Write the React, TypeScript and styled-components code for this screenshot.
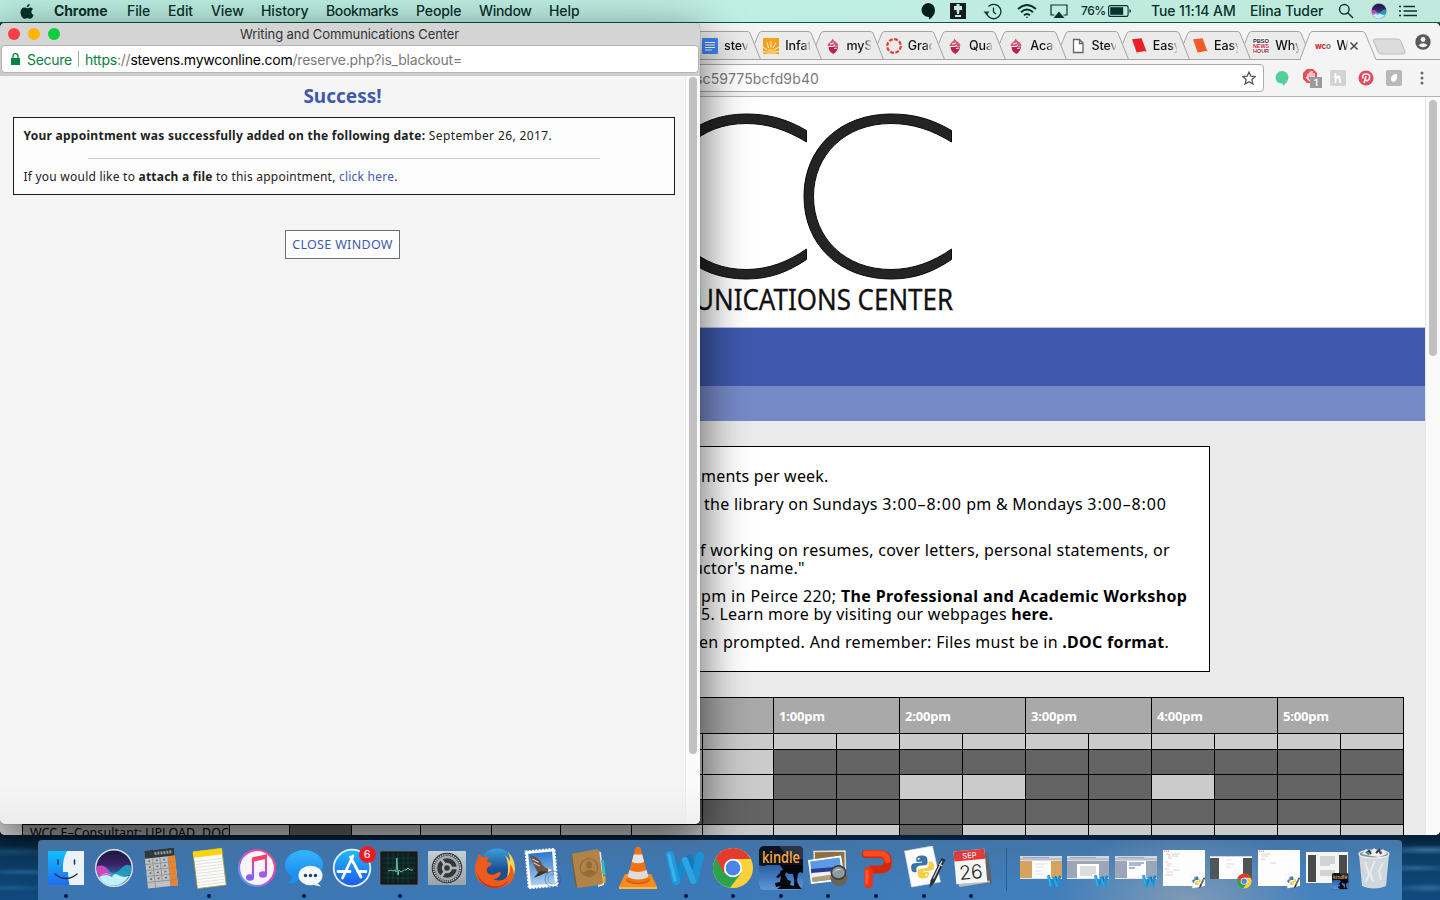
import React from "react";
import styled, { createGlobalStyle } from "styled-components";

const ui = `Inter, "Liberation Sans", sans-serif`;
const humanist = `"Noto Sans", "Open Sans", sans-serif`;

const GlobalStyle = createGlobalStyle`
  * { box-sizing: border-box; }
  html, body { margin: 0; padding: 0; overflow: hidden; }
  svg { display: block; }
`;

const Desktop = styled.div`
  position: relative;
  width: 1440px;
  height: 900px;
  overflow: hidden;
  font-family: ${ui};
  background:
    radial-gradient(ellipse 60px 5px at 14px 852px, #1d5580, transparent),
    radial-gradient(ellipse 50px 4px at 24px 872px, #1f6296, transparent),
    radial-gradient(ellipse 40px 4px at 10px 888px, #1b5c91, transparent),
    radial-gradient(ellipse 50px 5px at 1428px 850px, #3a6f97, transparent),
    radial-gradient(ellipse 40px 4px at 1415px 868px, #2c6692, transparent),
    radial-gradient(ellipse 40px 5px at 1430px 888px, #2a6a9a, transparent),
    linear-gradient(#0b5745 0 24px, #06213b 24px 838px, #0b3d68 856px, #104a7c 900px);
`;

/* ---------- menu bar ---------- */
const MenuBar = styled.header`
  display: flex;
  align-items: center;
  height: 22px;
  background: linear-gradient(90deg, #b9ecdf, #bfeee3 50%, #bfe9dc);
  color: #08322b;
`;
const AppleSlot = styled.div`
  width: 54px;
  padding-left: 20px;
`;
const MenuItem = styled.span<{ $w: number; $bold?: boolean; $ls?: number }>`
  width: ${(p) => p.$w}px;
  font-size: 14px;
  line-height: 22px;
  font-weight: ${(p) => (p.$bold ? 700 : 500)};
  letter-spacing: ${(p) => p.$ls ?? -0.1}px;
  white-space: nowrap;
`;
const StatusGroup = styled.div`
  display: flex;
  align-items: center;
  margin-left: auto;
  width: 527px;
`;
const StatusSlot = styled.div<{ $w: number }>`
  width: ${(p) => p.$w}px;
  display: flex;
  justify-content: center;
  flex: none;
`;
const StatusText = styled(MenuItem)<{ $size?: number }>`
  font-size: ${(p) => p.$size ?? 14}px;
  flex: none;
`;

/* ---------- browser window ---------- */
const BrowserWindow = styled.section`
  position: absolute;
  isolation: isolate;
  left: 0;
  top: 23px;
  width: 1440px;
  height: 812px;
  display: flex;
  flex-direction: column;
  background: #f3f3f3;
  border-radius: 5px;
  overflow: hidden;
`;
const TabStrip = styled.div`
  display: flex;
  height: 37px;
  padding: 8px 0 0 687px;
  background: #f4f4f4;
  box-shadow: inset 0 -1px #a6a6a6;
  flex: none;
`;
const TabBox = styled.div<{ $z: number; $w: number }>`
  position: relative;
  z-index: ${(p) => p.$z};
  width: ${(p) => p.$w}px;
  height: 29px;
  margin-right: -12.75px;
  padding-left: 15px;
  display: flex;
  align-items: center;
  flex: none;
  color: #111;
`;
const TabShape = styled.svg`
  position: absolute;
  left: 0;
  top: 0;
  z-index: -1;
`;
const TabTitle = styled.span<{ $w: number }>`
  width: ${(p) => p.$w}px;
  margin-left: 6px;
  font-size: 12.5px;
  font-weight: 450;
  letter-spacing: -0.1px;
  overflow: hidden;
  white-space: nowrap;
  mask-image: linear-gradient(90deg, #000 68%, rgba(0, 0, 0, 0.15));
`;
const NewTab = styled.svg`
  margin: 7px 0 0 8px;
  flex: none;
`;
const Profile = styled.svg`
  margin: 3px 0 0 7px;
  flex: none;
`;
const Toolbar = styled.div`
  display: flex;
  align-items: center;
  height: 37px;
  flex: none;
  background: #f4f4f4;
  border-bottom: 1px solid #b3b3b3;
`;
const AddressBar = styled.div`
  width: 1264px;
  height: 28px;
  display: flex;
  align-items: center;
  justify-content: space-between;
  padding: 0 7px 0 694px;
  background: #fff;
  border: 1px solid #ababab;
  border-radius: 4px;
  color: #7a7a7a;
  font-size: 14px;
  letter-spacing: 0.15px;
`;
const Extensions = styled.div`
  display: flex;
  align-items: center;
  gap: 12px;
  padding-left: 10px;
`;
const HoneyIcon = styled.svg`
  margin-left: -4px;
`;
const Page = styled.main`
  display: flex;
  flex: 1;
  min-height: 0;
  background: #ebebeb;
`;
const PageBody = styled.div`
  width: 1425px;
  overflow: hidden;
  flex: none;
`;
const PageScroll = styled.div`
  width: 15px;
  background: #fafafa;
  border-left: 1px solid #e8e8e8;
  padding: 3px 0 0 3px;
`;
const Thumb = styled.div<{ $h: number; $w: number }>`
  width: ${(p) => p.$w}px;
  height: ${(p) => p.$h}px;
  border-radius: 4px;
  background: #c1c1c1;
`;
const Banner = styled.div`
  height: 230px;
  background: #fff;
  padding-left: 640px;
`;
const NavBand = styled.div`
  height: 59px;
  background: #3e59ad;
  border-top: 1px solid #b9bfd4;
`;
const SubBand = styled.div`
  height: 35px;
  background: #768ac8;
`;
const Notice = styled.div`
  width: 995px;
  height: 226px;
  margin: 25px 0 25px 215px;
  padding: 20px 0 0 485px;
  background: #fff;
  border: 1px solid #000;
  display: flex;
  flex-direction: column;
  gap: 10px;
`;
const Paragraph = styled.div`
  font-family: ${humanist};
  font-size: 16px;
  line-height: 18px;
  color: #000;
`;
const Line = styled.div<{ $x?: number; $ls?: number }>`
  height: 18px;
  margin-left: ${(p) => p.$x ?? 0}px;
  letter-spacing: ${(p) => p.$ls ?? 0.2}px;
  white-space: nowrap;
`;
const Time = styled.span`
  letter-spacing: 0.9px;
`;
const Strong = styled.b<{ $ls?: number }>`
  font-weight: 700;
  letter-spacing: ${(p) => (p.$ls === undefined ? "inherit" : p.$ls + "px")};
`;

const Schedule = styled.div`
  width: 1382px;
  margin-left: 22px;
  display: grid;
  grid-template-columns: 207px 60px 62px 69px 71px 69px 71px 71px 71px repeat(10, 63px) 1px;
  grid-template-rows: 36px 16px 25px 25px 25px 25px;
`;
type Tone = "head" | "open" | "busy" | "name";
const tones: Record<Tone, string> = { head: "#a9a9a9", open: "#cbcbcb", busy: "#636363", name: "#a9a9a9" };
const Slot = styled.div<{ $tone: Tone; $span?: number }>`
  grid-column: span ${(p) => p.$span ?? 1};
  background: ${(p) => tones[p.$tone]};
  border: solid #000;
  border-width: 1px 0 0 1px;
  overflow: hidden;
`;
const HourCell = styled(Slot)`
  padding-left: 5px;
  font: 700 13px/36px "Open Sans", ${humanist};
  letter-spacing: -0.2px;
  color: #fff;
`;
const NameCell = styled(Slot)`
  padding-left: 7px;
  font: 12.5px/16px ${humanist};
  letter-spacing: 0.07px;
  white-space: nowrap;
  color: #000;
`;
const RightRule = styled.div`
  background: #000;
`;

/* ---------- confirmation popup ---------- */
const Popup = styled.section`
  position: absolute;
  left: 0;
  top: 23px;
  width: 700px;
  height: 801px;
  display: flex;
  flex-direction: column;
  border-radius: 5px;
  overflow: hidden;
  background: #ccc;
  box-shadow: 0 0 1px rgba(0, 0, 0, 0.5), 0 16px 46px 4px rgba(0, 0, 0, 0.58);
`;
const TitleBar = styled.div`
  height: 22px;
  display: flex;
  align-items: center;
  gap: 8px;
  padding-left: 8px;
  background: #d4d4d4;
  flex: none;
`;
const Light = styled.i<{ $c: string }>`
  width: 12px;
  height: 12px;
  border-radius: 50%;
  background: ${(p) => p.$c};
`;
const WindowTitle = styled.span`
  margin-left: 172px;
  font-size: 13px;
  letter-spacing: -0.09px;
  color: #333;
`;
const PopupAddress = styled.div`
  display: flex;
  align-items: center;
  height: 28px;
  margin: 0 1px 3px;
  padding-left: 9px;
  background: #fff;
  border: 1px solid #b4b4b4;
  border-radius: 4px;
  font-size: 14px;
  color: #7a7a7a;
  white-space: nowrap;
  flex: none;
`;
const SecureLabel = styled.span`
  width: 51px;
  margin-left: 7px;
  letter-spacing: -0.3px;
  color: #0b8043;
`;
const Divider = styled.i`
  width: 1px;
  height: 16px;
  margin-right: 6px;
  background: #a5a5a5;
`;
const Url = styled.span`
  letter-spacing: -0.22px;
  em { font-style: normal; color: #0b8043; }
  strong { font-weight: 400; color: #000; }
`;
const PopupContent = styled.div`
  display: flex;
  flex: 1;
`;
const PopupBody = styled.div`
  width: 685px;
  display: flex;
  flex-direction: column;
  align-items: center;
  background: linear-gradient(#f5f5f5 710px, #ececec);
  font-family: ${humanist};
`;
const PopupScroll = styled.div`
  width: 15px;
  padding: 1px 0 0 3px;
  background: linear-gradient(#fafafa 710px, #f0f0f0);
  border-left: 1px solid #e9e9e9;
`;
const Heading = styled.h1`
  margin: 7px 0 8px;
  font-size: 19px;
  line-height: 26px;
  font-weight: 700;
  color: #3e59ad;
`;
const Message = styled.div`
  width: 662px;
  height: 78px;
  margin-left: 2px;
  padding: 9px 10px;
  border: 1px solid #1c1c1c;
  background: #fdfdfd;
  font-size: 12px;
  line-height: 18px;
  color: #222;
  white-space: nowrap;
`;
const Rule = styled.div`
  height: 1px;
  width: 512px;
  margin: 13px 0 9px 64px;
  background: #ccc;
`;
const MsgLine = styled.div<{ $ls: number }>`
  letter-spacing: ${(p) => p.$ls}px;
`;
const LinkText = styled.a`
  color: #3e59ad;
`;
const CloseButton = styled.button`
  width: 115px;
  height: 29px;
  margin-top: 35px;
  padding: 0;
  border: 1px solid #707070;
  background: #fdfdfd;
  color: #3e59ad;
  font: 12.5px/27px ${humanist};
  letter-spacing: 0.32px;
  white-space: nowrap;
`;

/* ---------- dock ---------- */
const Dock = styled.nav`
  position: absolute;
  left: 38px;
  top: 840px;
  width: 1364px;
  height: 60px;
  padding-left: 4.2px;
  display: flex;
  border-radius: 4px 4px 0 0;
  background:
    radial-gradient(ellipse 130px 70px at 1148px 60px, #7f9ab6, transparent),
    linear-gradient(180deg, rgba(70, 110, 150, 0.55), transparent 70%),
    linear-gradient(90deg, #3b76b2, #3d79b7 50%, #4583be);
`;
const DockSlot = styled.div<{ $running?: boolean }>`
  position: relative;
  width: 47.65px;
  height: 60px;
  display: flex;
  justify-content: center;
  padding-top: 6px;
  flex: none;
  &::after {
    content: "";
    display: ${(p) => (p.$running ? "block" : "none")};
    position: absolute;
    left: 22px;
    bottom: 2px;
    width: 4px;
    height: 4px;
    border-radius: 50%;
    background: #06133a;
  }
`;
const DockDivider = styled.div`
  width: 1px;
  height: 43px;
  margin: 8px 10.5px 0;
  background: #235c92;
  flex: none;
`;
const Badge = styled.span`
  position: absolute;
  right: 0px;
  top: 6px;
  width: 17px;
  height: 17px;
  border-radius: 50%;
  background: #ef1b24;
  color: #fff;
  font-size: 11px;
  line-height: 17px;
  text-align: center;
`;
const Gradients = styled.svg`
  position: absolute;
`;

/* ---------- small drawings ---------- */
const tabIcons: Record<string, React.ReactNode> = {
  doc: <><rect width="16" height="16" rx="1" fill="#4285f4" /><path d="M3 4.500h10M3 7h10M3 9.500h10M3 12h7" stroke="#fff" strokeWidth="1.200" /></>,
  sun: <><rect width="16" height="16" fill="#f9a01b" /><path d="M5.500 10L4 4.500M8 9.500V3M10 10l3-5.500M11 12l5-3M4 12L0 9M11.500 14l4.500-.5M3.500 14L0 14" stroke="#fff" strokeWidth=".9" fill="none" /><path d="M4 16q-1-5 4-5 4 0 5 5z" fill="#fcc369" /></>,
  acorn: <><path d="M3.500 8.500c0 4 2 6 5 7.500 2.500-2 4.500-4 4.500-7.500z" fill="#b8234b" /><path d="M2.500 8C3 4 6.500 4.500 7.500.5 9 3.500 13 4 13.500 8z" fill="#cf5b7b" /><path d="M3.500 8.500h4.500l2-1.500M5 6l4-1M9 10.500l3-.5" stroke="#fff" strokeWidth=".9" fill="none" /></>,
  ring: <circle cx="8" cy="8" r="6.800" fill="none" stroke="#e23b30" strokeWidth="2.200" strokeDasharray="3.800 1.540" />,
  file: <path d="M3.500 1.500h6l3.500 3.500v9.500h-9.500zM9.500 1.500v4h3.500" fill="#fff" stroke="#666" strokeWidth="1.300" />,
  redbook: <><path d="M1 1.200L10.500.3 15.500 13.500 6 15.500z" fill="#e8202a" /><path d="M6 15L14.500 13.500" stroke="#fff" strokeWidth="1" /></>,
  orangebook: <><path d="M1 1.200L10.500.3 15.500 13.500 6 15.500z" fill="#f15a29" /><path d="M6 15L14.500 13.500" stroke="#fff" strokeWidth="1" /></>,
  pbs: (
    <g fontFamily="Liberation Sans, sans-serif" fontWeight="700" fontSize="5.800">
      <rect width="16" height="16" fill="#fff" />
      <text x="0" y="5" textLength="16" lengthAdjust="spacingAndGlyphs" fill="#222">PBSO</text>
      <text x="0" y="10" textLength="16" lengthAdjust="spacingAndGlyphs" fill="#c62a35">NEWS</text>
      <text x="0" y="15" textLength="16" lengthAdjust="spacingAndGlyphs" fill="#9d1d2b">HOUR</text>
    </g>
  ),
  wco: (
    <text x="0" y="11" textLength="16" fontFamily="Inter, sans-serif" fontWeight="700" fontSize="8" fill="#d3202a">
      wc<tspan fill="#777">o</tspan>
    </text>
  ),
};
const tabs = [
  { icon: "doc", title: "stev", w: 24 },
  { icon: "sun", title: "Infati", w: 25 },
  { icon: "acorn", title: "mySt", w: 24 },
  { icon: "ring", title: "Grad", w: 24 },
  { icon: "acorn", title: "Qual", w: 23 },
  { icon: "acorn", title: "Acad", w: 24 },
  { icon: "file", title: "Steve", w: 24 },
  { icon: "redbook", title: "Easy", w: 24 },
  { icon: "orangebook", title: "Easy", w: 24 },
  { icon: "pbs", title: "Why", w: 24 },
];

function Tab({ icon, title, w, z, active }: { icon: string; title: string; w: number; z: number; active?: boolean }) {
  return (
    <TabBox $z={z} $w={active ? 77 : 74}>
      <TabShape width={active ? 77 : 74} height="29" viewBox={`0 0 ${active ? 77 : 74} 29`}>
        <path
          d={active ? "M0 28.500L10 2Q11 .5 13 .5H62Q64 .5 65 2L76 28.500" : "M0 28.500L11 2Q12 .5 14 .5H60Q62 .5 63 2L73.500 28.500Z"}
          fill={active ? "#f4f4f4" : "#ebebeb"}
          stroke="#a4a4a4"
        />
        {active && <path d="M1 28.500H75.500" stroke="#f4f4f4" strokeWidth="1.400" />}
      </TabShape>
      <svg width="16" height="16" viewBox="0 0 16 16">{tabIcons[icon]}</svg>
      <TabTitle $w={w}>{title}</TabTitle>
      {active && (
        <svg width="12" height="12" viewBox="0 0 12 12">
          <path d="M2.500 2.500l7 7M9.500 2.500l-7 7" stroke="#4c4c4c" strokeWidth="1.600" />
        </svg>
      )}
    </TabBox>
  );
}

const letterC =
  "M311.500 33.500C290 21 272 17 251 17C200 17 164 51 164 99.500C164 148 200 182 251 182C275 182 293 175 311.500 162.500V152C293 165 273 172.500 251 172.500C205 172.500 173.500 141 173.500 99.500C173.500 58 205 26.500 251 26.500C273 26.500 292 33 311.500 45Z";

function Logo() {
  return (
    <svg width="330" height="230" viewBox="0 0 330 230">
      <g fill="#242424" stroke="#0c0c0c" strokeWidth="1">
        <path d={letterC} />
        <path d={letterC} transform="translate(-145 0)" />
      </g>
      <text x="55" y="213" textLength="258" lengthAdjust="spacingAndGlyphs" fontFamily="Noto Sans, sans-serif" fontSize="28.500" fill="#111" stroke="#111" strokeWidth=".3">
        UNICATIONS CENTER
      </text>
    </svg>
  );
}

const wordMark = (
  <g fill="none" strokeLinecap="round" strokeLinejoin="round" strokeWidth="8">
    <path d="M26 13L31 34" stroke="#1379bd" />
    <path d="M14 34L22 15" stroke="#108bd0" />
    <path d="M31 34L37 10" stroke="#1a93d6" />
    <path d="M7 9L13 35" stroke="#1e9bdc" />
    <path d="M22 14L30 35" stroke="#2aa5e3" strokeWidth="6" />
    <path d="M6 9l6 25" stroke="#3db2ec" strokeWidth="3" />
  </g>
);
const chromeMark = (
  <g>
    <circle cx="22" cy="22" r="20" fill="#fcd13a" />
    <path d="M4.700 12a20 20 0 0014.300 29.800L30.500 26.500 13.500 27z" fill="#2ba24c" />
    <path d="M22 2a20 20 0 0117.600 11H22L13 27 4.700 12A20 20 0 0122 2z" fill="#e33b2e" />
    <circle cx="22" cy="22" r="9.200" fill="#fff" />
    <circle cx="22" cy="22" r="7.400" fill="#4a86e8" />
  </g>
);
const pythonMark = (
  <g>
    <path d="M2.500 5l28-5 8 36-29 5z" fill="#fdfdfd" stroke="#d7d7d7" strokeWidth=".6" />
    <g transform="rotate(-6 20 20)">
      <path d="M20 9.500c-4 0-5 1.600-5 3.500v2.500h5.500v1H12.500c-2.500 0-3.500 2-3.500 4.500s1 4.500 3 4.500h2v-2.500c0-2 1.500-3.500 3.500-3.500H23c2 0 3-1.500 3-3V13c0-2-2-3.500-6-3.500z" fill="#3b74a8" />
      <path d="M21 32.500c4 0 5-1.600 5-3.500v-2.500h-5.500v-1h8c2.500 0 3.500-2 3.500-4.500s-1-4.500-3-4.500h-2V19c0 2-1.500 3.500-3.500 3.500H18c-2 0-3 1.500-3 3V29c0 2 2 3.500 6 3.500z" fill="#f7cf42" />
      <circle cx="17.500" cy="12.500" r="1" fill="#fff" />
      <circle cx="23.500" cy="29.500" r="1" fill="#fff" />
    </g>
    <path d="M39.500 12l4 1.500-11 23-5 5.500 1-7.500z" fill="#2c3136" />
    <path d="M40 15l-8.500 17.500M37 18l3.500 2" stroke="#cfd3d6" strokeWidth="1.200" />
  </g>
);
const kindleMark = (
  <g>
    <rect width="44" height="44" rx="5" fill="#0b1220" />
    <path d="M20 0h19q5 0 5 5v8q-14 2-24-13z" fill="#2b3444" />
    <path d="M0 19h44v20q0 5-5 5H5q-5 0-5-5z" fill="url(#kindleSky)" />
    <path d="M21 19h23v8l-3-1-2 2-1 6q1 6 5 9H18l4-3-5 1-1-4 5-1 1-6-3 2-2-1 4-4q0-3 3-3t3 3l-1 2 3 5 3 1-1 4 4 1q1-6-1-12l-4 0-5-3z" fill="#04070d" />
    <path d="M0 19q4 2 8 0z" fill="#0b1220" />
    <text x="3" y="16.500" textLength="38" lengthAdjust="spacingAndGlyphs" fontFamily="Open Sans, sans-serif" fontSize="16.500" fontWeight="600" fill="#fba93c">kindle</text>
  </g>
);

const icons: Record<string, React.ReactNode> = {
  finder: <><rect x="4" y="5" width="36" height="34" rx="1" fill="url(#finderBlue)" /><path d="M23 5h17v34H25.500q-1.500-6-1.500-13h-5Q18 14 23 5z" fill="#eaf1f8" /><path d="M14 14v4M30.500 14v4M11 28q11 9 22 0" fill="none" stroke="#14304f" strokeWidth="1.500" strokeLinecap="round" /></>,
  siri: <><circle cx="22" cy="22" r="18.300" fill="url(#siriBg)" stroke="#dfe3ea" strokeWidth="1.400" /><path d="M4.500 21q7-4 13 4 5 5 12-3 6-6 10-1 0 5-2 8-14 3-31 0-2-4-2-8z" fill="#1fa7c4" opacity=".85" /><path d="M4.500 21q6-4 11 3l4 5q-8 3-13 1-2-4-2-9z" fill="#e83ac0" opacity=".85" /><path d="M7 31q7-4 13 0 2-5 6-2 5 3 11 1-5 9-15 9.500T7 31z" fill="#bdf1fb" /><path d="M6 30q8-5 16 0t16 0q-8 4-16 0T6 30z" fill="#fff" /></>,
  calc: <g transform="rotate(-6 22 22)"><rect x="7" y="3" width="30" height="38" fill="#bfc1c2" /><path d="M7 3h30v8H7z" fill="#2c3a3e" /><path d="M30 11h7v30h-7z" fill="#f5811f" /><path d="M7 17h30M7 23h30M7 29h30M7 35h30M14.500 11v30M22 11v24M30 11v30" stroke="#8b8f91" strokeWidth=".8" /><path d="M17 7h18" stroke="#8d9a9c" strokeWidth="3" strokeDasharray="2 1" /><path d="M10 14h2M17.500 14h2M25 14h2M10 20h2M17.500 20h2M25 20h2M10 26h2M17.500 26h2M25 26h2M10 32h2M17.500 32h2M25 32h2" stroke="#66696b" strokeWidth="1.500" /></g>,
  notes: <g transform="rotate(-7 22 22)"><rect x="8" y="4" width="29" height="37" fill="#fcfcfa" stroke="#b59b3b" strokeWidth=".8" /><path d="M8 4h29v6H8z" fill="#fbd50c" /><path d="M9 14h27M9 17h27M9 20h27M9 23h27M9 26h27M9 29h27M9 32h27M9 35h27M9 38h27" stroke="#dcdcdc" strokeWidth=".8" /></g>,
  music: <><circle cx="22" cy="22" r="18" fill="#f7f5f9" stroke="url(#itunes)" strokeWidth="2.200" /><path d="M18 31V13.500l13-3V28" fill="none" stroke="url(#noteInk)" strokeWidth="2.200" /><path d="M17 11.500l15-3.300v4.500L17 16z" fill="#f6416c" /><ellipse cx="15" cy="31.500" rx="4" ry="3.200" fill="#8a5cf0" /><ellipse cx="28" cy="28.500" rx="4" ry="3.200" fill="#a25cea" /></>,
  messages: <><ellipse cx="22" cy="19" rx="19" ry="15" fill="url(#bubble)" /><path d="M10 28q0 7-5 10 9 0 13-6z" fill="#1e8ff3" /><ellipse cx="28.500" cy="29.500" rx="12" ry="9.800" fill="#f4f8fb" /><path d="M33 35l6 5.500-10-2z" fill="#f4f8fb" /><g fill="#1e3f6d"><circle cx="23.500" cy="29.500" r="1.700" /><circle cx="28.500" cy="29.500" r="1.700" /><circle cx="33.500" cy="29.500" r="1.700" /></g></>,
  appstore: <><circle cx="22" cy="22" r="18.300" fill="url(#store)" stroke="#e9f2fb" strokeWidth="1.800" /><path d="M23 10L12.500 32M20.500 11L31 31" stroke="#fff" strokeWidth="2.800" strokeLinecap="round" /><path d="M8 25.500h12M28 25.500h8" stroke="#fff" strokeWidth="2.800" strokeLinecap="round" /></>,
  activity: <><rect x="3" y="5" width="38" height="34" rx="1.500" fill="#17191a" stroke="#686d70" strokeWidth=".8" /><rect x="6" y="7.500" width="32" height="29" fill="#0d2022" /><path d="M11 7v30M16 7v30M21 7v30M26 7v30M31 7v30M6 12h32M6 17h32M6 22h32M6 27h32M6 32h32" stroke="#1d4a45" strokeWidth=".6" /><path d="M11 25l3-1 2 1 2-1 1 2 .800-14 1.200 17 1-5 2 2 3-2 2 0 2-2 2 2 3 0" stroke="#6fd3b5" strokeWidth=".9" fill="none" /></>,
  settings: <><rect x="3" y="5" width="38" height="34" rx="1" fill="url(#steel)" /><circle cx="22" cy="22" r="15.300" fill="#33373a" /><circle cx="22" cy="22" r="13.300" fill="none" stroke="#b9bdbf" strokeWidth="1.800" strokeDasharray="1.300 .9" /><circle cx="22" cy="22" r="11" fill="none" stroke="#a5a9ab" strokeWidth="2.400" /><circle cx="22" cy="22" r="4" fill="none" stroke="#b1b5b7" strokeWidth="2.400" /><path d="M20 18.500L16 13M26 22h7M20 25.500L16 31" stroke="#b1b5b7" strokeWidth="2.600" /></>,
  firefox: <><circle cx="24" cy="20" r="17.500" fill="url(#globe)" /><path d="M35 6q7 7 7 17-1 16-18 19 12-7 11-19 0-9-3-14 4 3 5 7 0-6-2-10z" fill="#fbd34d" /><path d="M5 8q3 1 5 4 3-2 6-1-2 2-2 5 2 0 5 1-1 3-4 4-3 4 1 7 4 2 8-1 3-2 4 0-2 6-8 6 8 4 14-2 4-5 3-13 4 5 4 12-3 11-19 12Q7 41 2.500 28 1 18 5 12z" fill="#ee5b1a" /><path d="M3 25q4 12 15 15 12 2 19-7-5 9-16 9Q7 41 3 25z" fill="#c9300f" /></>,
  mail: <g transform="rotate(-5 22 22)"><rect x="7" y="4" width="29" height="37" fill="#fff" stroke="#fff" strokeWidth="2" strokeDasharray="2 1.300" /><rect x="9.500" y="6.500" width="24" height="32" fill="url(#stampSky)" /><path d="M11 8q8 2 11 9 1 4 5 6l4 1-2 3-7 1q-5-1-6-5-4-8-5-15z" fill="#6a5340" /><path d="M13 12l6 4M14 16l6 4" stroke="#d9d2c4" strokeWidth="1" /><path d="M19 25l-6 6 7-2 7-3z" fill="#3f3327" /><path d="M28 23l4 2-4 2z" fill="#f2ede2" /><circle cx="32" cy="34" r="8" fill="none" stroke="#2f5d8c" strokeWidth="1" opacity=".55" /><circle cx="32" cy="34" r="5" fill="none" stroke="#2f5d8c" strokeWidth=".7" opacity=".5" /></g>,
  contacts: <><path d="M29 5l4 1 3 33-6 2z" fill="#ece7dc" /><path d="M33 14h3l1 9h-3z" fill="#35b4cb" /><path d="M34 23h3l.600 6h-3z" fill="#41c48c" /><path d="M34.500 30h3v7h-3z" fill="#eaa82f" /><path d="M5 7.500L28 3.200q3-.2 3.300 2.800L35 36q0 2-2 2.500L11 42q-2 0-2.500-2L3.500 10q0-2 1.500-2.500z" fill="#b08448" /><path d="M4 8.500L9 41q-1.500-.3-2-2.500L3.300 10z" fill="#805b2c" /><circle cx="21" cy="21.500" r="8.800" fill="none" stroke="#946b37" strokeWidth="1.300" /><ellipse cx="21" cy="19" rx="3" ry="3.700" fill="#946b37" /><path d="M14.500 27q6.500-6 13-1-5 6-13 1z" fill="#946b37" /></>,
  vlc: <><path d="M9 28h26l6 12.500v2.500H3v-2.500z" fill="#f98d1c" /><path d="M3 41h38v2H3z" fill="#fbb54c" /><ellipse cx="22" cy="34" rx="12" ry="4" fill="#c9590c" /><path d="M19.500 1.500q2.500-1.500 5 0L33 34q-11 6-22 0z" fill="#f47216" /><path d="M17.800 8.500h8.400l2 7.500q-6 2.500-12.400 0z" fill="#e4e4e4" /><path d="M13.400 24q8.600 4 17.200 0l1.900 7q-10.500 5-21 0z" fill="#dcdcdc" /></>,
  word: wordMark,
  chrome: chromeMark,
  kindle: kindleMark,
  preview: <><path d="M8 5.500l31-.5.500 26-30 3z" fill="#8d7044" stroke="#e9dfc8" strokeWidth="1.500" /><path d="M2 14l33-4.500 4 24.500L5 38z" fill="#fff" /><path d="M4 15.500l29.500-4 3.200 20.500L6.500 36z" fill="#5b9be6" /><path d="M4.800 23l30-2.500.7 5L5.500 28z" fill="#2a3a94" /><path d="M5.400 27l30-2.500.7 3L20 31l-14 1.500z" fill="#eef3f5" /><path d="M6 31.500l20-3 10 1 .7 3L6.500 36z" fill="#b59b78" /><ellipse cx="33" cy="32" rx="8.500" ry="8" fill="#6b6354" /><ellipse cx="32.500" cy="26.500" rx="8" ry="7.500" fill="#3c3f40" /><ellipse cx="32.500" cy="26.500" rx="6.300" ry="5.800" fill="#8f9aa0" /><path d="M28 26q3-5 8-2-4-1-8 2z" fill="#dfe6ea" /></>,
  powerpoint: <g fill="none" strokeLinecap="round" strokeLinejoin="round"><path d="M12 8H26Q34 9 34 16T26 23.500H18" stroke="#d5270b" strokeWidth="8" /><path d="M12 7.500H26Q33 8.500 33.500 14" stroke="#fb4a22" strokeWidth="6" /><path d="M14.500 25v13" stroke="#f23212" strokeWidth="8.500" /><path d="M13 25v12" stroke="#ff5a33" strokeWidth="3" /></g>,
  python: pythonMark,
  trash: <><path d="M7 8h30l-3 32q-12 5-24 0z" fill="#d9dcdd" opacity=".95" /><ellipse cx="22" cy="8" rx="15" ry="4" fill="#87939b" stroke="#eef2f3" strokeWidth="1.200" /><path d="M10 8l4-5 5 3 3-4 5 4 4-3 4 5-8 3-8-1z" fill="#eceeee" /><path d="M14 7l3-2 2 3M24 7l3-3 2 4" stroke="#30383d" strokeWidth="2" fill="none" /><path d="M15 6l2 3" stroke="#36a08d" strokeWidth="2" /><path d="M28 5l2 2" stroke="#c9524b" strokeWidth="1.500" /><path d="M13 16l4 12-3 8M23 15l-5 11 3 10M31 17l-4 8 2 9" stroke="#f1f3f3" strokeWidth="2" fill="none" opacity=".7" /></>,
  calendar: (
    <g transform="rotate(-5 22 22)">
      <path d="M8 8h32l2 31H9z" fill="#5d6467" />
      <path d="M8 37l31-1 1 2-31 2z" fill="#b9bdbf" />
      <rect x="6" y="4" width="31" height="33" fill="#f6f6f6" />
      <path d="M6 4h31v10H6z" fill="#e2393d" />
      <text x="21.500" y="12" textAnchor="middle" fontFamily="Inter, sans-serif" fontSize="7.500" fill="#fff">SEP</text>
      <text x="21.500" y="33" textAnchor="middle" fontFamily="Inter, sans-serif" fontSize="19.500" fontWeight="300" fill="#222">26</text>
    </g>
  ),
};

function Mini({ kind }: { kind: string }) {
  const corner =
    kind === "chrome" ? chromeMark : kind === "kindle" ? kindleMark : kind === "code" || kind === "code2" ? pythonMark : wordMark;
  return (
    <svg width="44" height="44" viewBox="0 0 44 44">
      {kind.startsWith("word") && (
        <>
          <rect x="1" y="11" width="42" height="22" fill={kind === "word1" ? "#d7a25b" : "#9ba6b8"} />
          <path d="M1 10h42v5H1z" fill="#d4d8e3" />
          <path d="M1 13h42M4 11.500h26" stroke="#969cab" strokeWidth=".8" />
          <path d={kind === "word2" ? "M11 18h22v15H11z" : "M13 15h19v18H13z"} fill="#fff" />
          {kind === "word1" && <path d="M16 18h12M17 21h8M16 25h6M16 28h10" stroke="#d0d0d0" strokeWidth=".7" />}
          {kind === "word2" && <path d="M14 21h16M14 23h16M14 25h16M14 27h16M14 29h12" stroke="#aaa" strokeWidth=".8" />}
          {kind === "word3" && <path d="M15 17h15M15 19h12M15 22h6" stroke="#4976b0" strokeWidth="1" />}
          <path d="M1 32.500h42" stroke="#e4e7ec" />
        </>
      )}
      {kind.startsWith("code") && (
        <>
          <rect x="1" y="4" width="42" height="36" fill="#fdfdfd" />
          <path d="M2 5.200h5" stroke="#ef6b62" strokeDasharray="1.200 .8" />
          {kind === "code" ? (
            <path d="M4 8h4M6 10h3M6 12h4M3 16h3M5 18h4M5 20h3M3 23h4M5 26h6M3 29h8" stroke="#dda6c6" strokeWidth=".6" />
          ) : (
            <path d="M4 8h9M4 10h7M4 13h4M13 17h6" stroke="#b5cbb0" strokeWidth=".6" />
          )}
          {kind === "code" && <path d="M10 8h8M10 10h6M11 24h7" stroke="#9fd19c" strokeWidth=".6" />}
        </>
      )}
      {kind === "chrome" && <><rect x="1" y="10" width="42" height="23" fill="#fff" /><path d="M1 12h9v21H1zM34 12h9v21h-9z" fill="#4f5659" /><path d="M1 10.500h42" stroke="#d2d5d8" /><path d="M17 14h6M17 18h8M17 21h5" stroke="#ccc" strokeWidth=".7" /></>}
      {kind === "kindle" && <><rect x="1" y="6" width="42" height="31" fill="#f5f5f5" /><path d="M3 9h8v27H3zM34 9h8v27h-8z" fill="#4b4b4b" /><path d="M15 11h15M15 13h15M15 15h15M15 17h15M15 19h10M15 25h15M15 27h15M15 29h15" stroke="#a0a0a0" strokeWidth=".8" /></>}
      <g transform="translate(27 27) scale(.37)">{corner}</g>
    </svg>
  );
}

const dockApps: [string, boolean][] = [
  ["finder", true], ["siri", false], ["calc", false], ["notes", true], ["music", false],
  ["messages", true], ["appstore", false], ["activity", true], ["settings", false], ["firefox", false],
  ["mail", false], ["contacts", false], ["vlc", false], ["word", true], ["chrome", true],
  ["kindle", true], ["preview", true], ["powerpoint", true], ["python", true], ["calendar", true],
];
const minis = ["word1", "word2", "word3", "code", "chrome", "code2", "kindle"];

const hours = ["1:00pm", "2:00pm", "3:00pm", "4:00pm", "5:00pm"];
const bookings = [
  "ooooooooooooooooooo",
  "noooooooobbbbbbbbbb",
  "noooooooobboobbobbb",
  "nbbbbbbbbbbbbbbbbbb",
];

export default function App() {
  return (
    <Desktop>
      <GlobalStyle />
      <Gradients width="0" height="0">
        <defs>
          <linearGradient id="itunes" x1="1" y1="0" x2="0" y2="1"><stop stopColor="#fb4767" /><stop offset=".5" stopColor="#c84bd6" /><stop offset="1" stopColor="#3cb3f5" /></linearGradient>
          <linearGradient id="noteInk" x1="0" y1="0" x2="0" y2="1"><stop stopColor="#fb4767" /><stop offset="1" stopColor="#8a5cf0" /></linearGradient>
          <linearGradient id="store" x1="0" y1="0" x2="0" y2="1"><stop stopColor="#1dbcf7" /><stop offset="1" stopColor="#1f59ee" /></linearGradient>
          <linearGradient id="bubble" x1="0" y1="0" x2="0" y2="1"><stop stopColor="#35b5fc" /><stop offset="1" stopColor="#1787f0" /></linearGradient>
          <linearGradient id="finderBlue" x1="0" y1="0" x2="0" y2="1"><stop stopColor="#12c0fc" /><stop offset="1" stopColor="#1f6cf0" /></linearGradient>
          <linearGradient id="siriBg" x1="0" y1="0" x2="0" y2="1"><stop stopColor="#171a3c" /><stop offset=".4" stopColor="#3b1f66" /><stop offset=".7" stopColor="#2b6c9e" /><stop offset="1" stopColor="#3b3f86" /></linearGradient>
          <linearGradient id="kindleSky" x1="0" y1="0" x2="0" y2="1"><stop stopColor="#2a5da6" /><stop offset="1" stopColor="#5c97d8" /></linearGradient>
          <linearGradient id="steel" x1="0" y1="0" x2="0" y2="1"><stop stopColor="#c3d0d8" /><stop offset="1" stopColor="#9aa3a9" /></linearGradient>
          <linearGradient id="globe" x1="0" y1="0" x2="0" y2="1"><stop stopColor="#3aa0dc" /><stop offset=".6" stopColor="#1b4f93" /></linearGradient>
          <linearGradient id="stampSky" x1="0" y1="0" x2="0" y2="1"><stop stopColor="#2e78cf" /><stop offset="1" stopColor="#a9cfee" /></linearGradient>
        </defs>
      </Gradients>

      <MenuBar>
        <AppleSlot>
          <svg width="14" height="17" viewBox="0 0 14 17" fill="#08322b">
            <path d="M9.700 1c.1 1.800-1.200 3.200-2.900 3.300C6.600 2.600 8 1.200 9.700 1z" />
            <path d="M7.200 5.200c.8 0 1.700-.8 3-.8 1.200 0 2.300.6 2.900 1.500-2.500 1.500-2.100 4.900.5 5.900-.6 1.800-2 4-3.400 4-1.100 0-1.500-.6-2.900-.6-1.300 0-1.800.6-2.800.6C2.700 15.800.5 12.500.5 9.300c0-3 1.900-4.800 3.900-4.800 1.200 0 2 .7 2.800.7z" />
          </svg>
        </AppleSlot>
        <MenuItem $w={73} $bold>Chrome</MenuItem>
        <MenuItem $w={41}>File</MenuItem>
        <MenuItem $w={43}>Edit</MenuItem>
        <MenuItem $w={50}>View</MenuItem>
        <MenuItem $w={65}>History</MenuItem>
        <MenuItem $w={90} $ls={-0.35}>Bookmarks</MenuItem>
        <MenuItem $w={63}>People</MenuItem>
        <MenuItem $w={70} $ls={-0.3}>Window</MenuItem>
        <MenuItem $w={40}>Help</MenuItem>
        <StatusGroup>
          <StatusSlot $w={30}><svg width="16" height="18" viewBox="0 0 16 18"><path d="M8 1a7 7 0 017 7q0 6-6 9.500V15A7 7 0 018 1z" fill="#031f1a" /></svg></StatusSlot>
          <StatusSlot $w={30}><svg width="16" height="16" viewBox="0 0 16 16"><path d="M0 0h16v16H0z" fill="#141c1c" /><path d="M6.500 1h3v2H12v4H9.500l-.5 4h-2l-.5-4H4V3h2.500zM5 12h6v2H5z" fill="#c9e9df" /></svg></StatusSlot>
          <StatusSlot $w={38}><svg width="19" height="17" viewBox="0 0 19 17" fill="none" stroke="#08322b" strokeWidth="1.300"><path d="M3.500 9A7.200 7.200 0 105.500 3.500M10.500 4.500V9l2.500 2" /><path d="M.5 8.500h6L3.500 12z" fill="#08322b" stroke="none" /></svg></StatusSlot>
          <StatusSlot $w={32}><svg width="20" height="15" viewBox="0 0 20 15" fill="none" stroke="#08322b" strokeWidth="2"><path d="M1 5q9-8 18 0M4 8.300q6-5.500 12 0M7 11.300q3-2.500 6 0" /><circle cx="10" cy="13.300" r=".8" fill="#08322b" stroke="none" /></svg></StatusSlot>
          <StatusSlot $w={31}><svg width="18" height="15" viewBox="0 0 18 15"><path d="M4.500 11H1V1h16v10h-3.500" fill="none" stroke="#08322b" strokeWidth="1.200" /><path d="M9 7.500l5.500 6.500h-11z" fill="#08322b" /></svg></StatusSlot>
          <StatusSlot $w={7} />
          <StatusText $w={27} $size={12} $ls={-0.5}>76%</StatusText>
          <svg width="24" height="12" viewBox="0 0 24 12"><rect x=".6" y=".6" width="19.500" height="10.800" rx="2" fill="none" stroke="#08322b" strokeWidth="1.100" /><rect x="2.200" y="2.200" width="13" height="7.600" fill="#08322b" /><path d="M21.500 4v4q1.500-.5 1.500-2t-1.500-2z" fill="#08322b" /></svg>
          <StatusSlot $w={19} />
          <StatusText $w={99}>Tue 11:14 AM</StatusText>
          <StatusText $w={82}>Elina Tuder</StatusText>
          <StatusSlot $w={28}><svg width="16" height="16" viewBox="0 0 16 16" fill="none" stroke="#08322b" strokeWidth="1.400"><circle cx="6.300" cy="6.300" r="4.800" /><path d="M10 10l5 5" /></svg></StatusSlot>
          <StatusSlot $w={38}><svg width="16" height="16" viewBox="3 3 38 38">{icons.siri}</svg></StatusSlot>
          <StatusSlot $w={20}><svg width="18" height="12" viewBox="0 0 18 12"><path d="M0 1.500h2M4.500 1.500H16M0 6h2M4.500 6H18M0 10.500h2M4.500 10.500H18" stroke="#08322b" strokeWidth="1.700" /></svg></StatusSlot>
        </StatusGroup>
      </MenuBar>

      <BrowserWindow>
        <TabStrip>
          {tabs.map((t, i) => <Tab key={i} {...t} z={10 - i} />)}
          <Tab icon="wco" title="W" w={11} z={12} active />
          <NewTab width="36" height="18" viewBox="0 0 36 18"><path d="M3 1h23q2 0 3 2l4 11q.5 2-2 2H9q-2 0-3-2L1.500 3Q1 1 3 1z" fill="#dcdcdc" stroke="#bdbdbd" /></NewTab>
          <Profile width="16" height="16" viewBox="0 0 16 16"><circle cx="8" cy="8" r="7.700" fill="#5a5a5a" /><circle cx="8" cy="5.500" r="2.400" fill="#f4f4f4" /><path d="M3.500 11.300Q8 7 12.500 11.300 8 15 3.500 11.300z" fill="#f4f4f4" /></Profile>
        </TabStrip>
        <Toolbar>
          <AddressBar>
            <span>sc59775bcfd9b40</span>
            <svg width="14" height="14" viewBox="0 0 14 14"><path d="M7 1l1.800 4.200 4.500.4-3.400 3 1 4.400L7 10.700 3.100 13l1-4.400-3.400-3 4.500-.4z" fill="none" stroke="#555" strokeWidth="1.300" /></svg>
          </AddressBar>
          <Extensions>
            <svg width="16" height="17" viewBox="0 0 16 17"><path d="M8 1a6.500 6.500 0 016.500 6.500q0 3-5 8.500l-1-2.500Q1.500 13.500 1.500 7.500A6.500 6.500 0 018 1z" fill="#54cf9c" /></svg>
            <svg width="20" height="20" viewBox="0 0 20 20"><path d="M5 1h6l4 4v6l-4 4H5l-4-4V5z" fill="#e94b52" /><path d="M6 11V5.500M8 9V3.500M10 9V3M12 10V5M4 9l4 4" stroke="#fff" strokeWidth="1.300" fill="none" /><rect x="8" y="9" width="12" height="11" fill="#9b9b9b" /><text x="14" y="18" textAnchor="middle" fontFamily="Inter, sans-serif" fontWeight="600" fontSize="9.500" fill="#fff">1</text></svg>
            <HoneyIcon width="16" height="16" viewBox="0 0 16 16"><rect width="16" height="16" rx="2" fill="#d3d3d3" /><path d="M5.500 3v10M6 8.500q4-2 4 .500v4M3.500 6.500h7" stroke="#fff" strokeWidth="1.600" fill="none" /></HoneyIcon>
            <svg width="16" height="16" viewBox="0 0 16 16"><circle cx="8" cy="8" r="7.500" fill="#e5485a" /><path d="M6 13l2-7M5 8.500Q3.500 4 8 4t3.500 4T7.500 10" fill="none" stroke="#fff" strokeWidth="1.600" /></svg>
            <svg width="16" height="16" viewBox="0 0 16 16"><rect width="16" height="16" rx="2" fill="#b8b8b8" /><path d="M5 9q0-5 6-5 1 6-3 8Q5 12 5 9z" fill="#fff" /></svg>
            <svg width="16" height="16" viewBox="0 0 16 16" fill="#6b6b6b"><circle cx="8" cy="3" r="1.500" /><circle cx="8" cy="8" r="1.500" /><circle cx="8" cy="13" r="1.500" /></svg>
          </Extensions>
        </Toolbar>
        <Page>
          <PageBody>
            <Banner><Logo /></Banner>
            <NavBand />
            <SubBand />
            <Notice>
              <Paragraph><Line $x={0}>ments per week.</Line></Paragraph>
              <Paragraph><Line $x={3} $ls={0.26}>the library on Sundays <Time>3:00–8:00</Time> pm &amp; Mondays <Time>3:00–8:00</Time></Line><Line /></Paragraph>
              <Paragraph><Line $x={-1} $ls={0.29}>f working on resumes, cover letters, personal statements, or</Line><Line $x={-8}>uctor's name."</Line></Paragraph>
              <Paragraph>
                <Line $ls={0.38}>pm in Peirce 220; <Strong>The Professional and Academic Workshop</Strong></Line>
                <Line $ls={0.27}>5. Learn more by visiting our webpages <Strong $ls={0.2}>here.</Strong></Line>
              </Paragraph>
              <Paragraph><Line $x={-2} $ls={0.3}>en prompted. And remember: Files must be in <Strong>.DOC format</Strong>.</Line></Paragraph>
            </Notice>
            <Schedule>
              <Slot $tone="head" $span={9} />
              {hours.map((h) => <HourCell key={h} $tone="head" $span={2}>{h}</HourCell>)}
              <RightRule />
              {bookings.map((row, r) => (
                <React.Fragment key={r}>
                  {row.split("").map((c, i) => <Slot key={i} $tone={c === "b" ? "busy" : c === "n" ? "name" : "open"} />)}
                  <RightRule />
                </React.Fragment>
              ))}
              <NameCell $tone="name">WCC E–Consultant: UPLOAD .DOC</NameCell>
              {"obooooooooboooooooo".slice(0, 18).split("").map((c, i) => <Slot key={i} $tone={c === "b" ? "busy" : "open"} />)}
              <RightRule />
            </Schedule>
          </PageBody>
          <PageScroll><Thumb $w={8} $h={256} /></PageScroll>
        </Page>
      </BrowserWindow>

      <Popup>
        <TitleBar>
          <Light $c="#fc3d44" /><Light $c="#fdb405" /><Light $c="#0bcf3b" />
          <WindowTitle>Writing and Communications Center</WindowTitle>
        </TitleBar>
        <PopupAddress>
          <svg width="9" height="12" viewBox="0 0 9 12"><path d="M0 5h9v7H0z" fill="#0b8043" /><path d="M2 5V3q0-2.300 2.500-2.300T7 3v2" fill="none" stroke="#0b8043" strokeWidth="1.300" /></svg>
          <SecureLabel>Secure</SecureLabel>
          <Divider />
          <Url><em>https</em>://<strong>stevens.mywconline.com</strong>/reserve.php?is_blackout=</Url>
        </PopupAddress>
        <PopupContent>
          <PopupBody>
            <Heading>Success!</Heading>
            <Message>
              <MsgLine $ls={0.38}><Strong $ls={0.27}>Your appointment was successfully added on the following date:</Strong> September 26, 2017.</MsgLine>
              <Rule />
              <MsgLine $ls={0.23}>If you would like to <Strong>attach a file</Strong> to this appointment, <LinkText>click here</LinkText>.</MsgLine>
            </Message>
            <CloseButton>CLOSE WINDOW</CloseButton>
          </PopupBody>
          <PopupScroll><Thumb $w={8} $h={677} /></PopupScroll>
        </PopupContent>
      </Popup>

      <Dock>
        {dockApps.map(([name, running]) => (
          <DockSlot key={name} $running={running}>
            <svg width="44" height="44" viewBox="0 0 44 44">{icons[name]}</svg>
            {name === "appstore" && <Badge>6</Badge>}
          </DockSlot>
        ))}
        <DockDivider />
        {minis.map((kind) => <DockSlot key={kind}><Mini kind={kind} /></DockSlot>)}
        <DockSlot><svg width="44" height="44" viewBox="0 0 44 44">{icons.trash}</svg></DockSlot>
      </Dock>
    </Desktop>
  );
}
